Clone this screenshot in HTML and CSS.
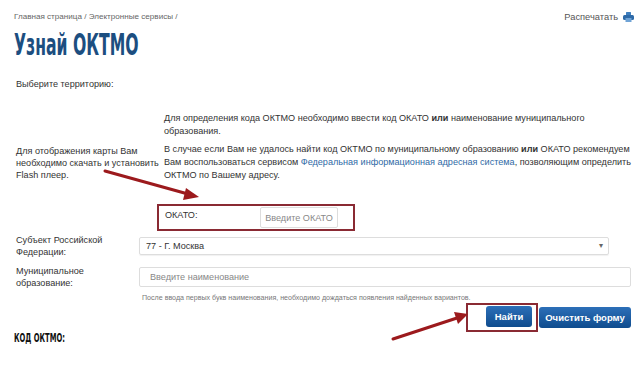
FILE: index.html
```html
<!DOCTYPE html>
<html lang="ru">
<head>
  <meta charset="UTF-8">
  <title>Узнай ОКТМО</title>
  <link rel="stylesheet" href="styles.css">
</head>
<body>
  <div class="page">

    <!-- шапка -->
    <div class="topbar">
      <div class="crumbs">Главная страница / Электронные сервисы /</div>
      <a class="print" href="#">Распечатать
        <svg class="print-ico" width="11" height="10" viewBox="0 0 11 10">
          <rect x="3" y="0" width="5" height="3" rx="0.5" fill="#3f7fbf"/>
          <rect x="0" y="3" width="11" height="5" rx="1.5" fill="#2e6aa8"/>
          <rect x="2.5" y="6" width="6" height="4" fill="#6fa3d6"/>
        </svg>
      </a>
    </div>

    <h1 class="title"><span>Узнай ОКТМО</span></h1>

    <p class="choose">Выберите территорию:</p>

    <!-- описание -->
    <div class="info">
      <div class="flash">Для отображения карты Вам<br>необходимо скачать и установить<br>Flash плеер.</div>
      <div class="notes">
        <p>Для определения кода ОКТМО необходимо ввести код ОКАТО <b>или</b> наименование муниципального<br>образования.</p>
        <p>В случае если Вам не удалось найти код ОКТМО по муниципальному образованию <b>или</b> ОКАТО рекомендуем<br>Вам воспользоваться сервисом <a href="#">Федеральная информационная адресная система</a>, позволяющим определить<br>ОКТМО по Вашему адресу.</p>
      </div>
    </div>

    <!-- форма -->
    <div class="okato">
      <span class="okato-label">ОКАТО:</span>
      <input type="text" class="okato-input" placeholder="Введите ОКАТО">
    </div>

    <div class="field">
      <label>Субъект Российской<br>Федерации:</label>
      <div class="select">77 - Г. Москва<span class="caret">▾</span></div>
    </div>

    <div class="field">
      <label>Муниципальное<br>образование:</label>
      <input type="text" class="text-input" placeholder="Введите наименование">
    </div>

    <p class="hint">После ввода первых букв наименования, необходимо дождаться появления найденных вариантов.</p>

    <div class="actions">
      <span class="mark"><button class="btn">Найти</button></span>
      <button class="btn">Очистить форму</button>
    </div>

    <h2 class="result"><span>КОД ОКТМО:</span></h2>

    <!-- стрелки поверх -->
    <svg class="arrows" width="640" height="366" viewBox="0 0 640 366">
      <line x1="105" y1="171" x2="188" y2="194" stroke="#9c1a1d" stroke-width="3" stroke-linecap="round"/>
      <polygon points="199,197 186,188 183,200" fill="#9c1a1d"/>
      <line x1="393" y1="339" x2="457" y2="318" stroke="#9c1a1d" stroke-width="3" stroke-linecap="round"/>
      <polygon points="468,314 454,312 458,324" fill="#9c1a1d"/>
    </svg>
  </div>
</body>
</html>
```

FILE: styles.css
```css
body {
  margin: 0;
  background: #fff;
  color: #333;
  font-family: 'Liberation Sans', Arial, sans-serif;
  font-size: 9.1px;
}
.page {
  position: relative;
  width: 640px;
  height: 366px;
  overflow: hidden;
  padding: 0 9px 0 14px;
  box-sizing: border-box;
}
p {
  margin: 0;
}
.topbar {
  display: flex;
  justify-content: space-between;
  align-items: center;
  padding-top: 11px;
  line-height: 12px;
}
.crumbs {
  color: #666;
  font-size: 8.1px;
}
.print {
  color: #555;
  font-size: 9.3px;
  text-decoration: none;
  display: flex;
  align-items: center;
  gap: 5px;
  margin-right: -3px;
}
.title {
  margin: 7px 0 0;
  height: 30px;
  line-height: 30px;
  font-family: 'DejaVu Sans Condensed', 'DejaVu Sans', sans-serif;
  font-size: 30px;
  font-weight: bold;
  color: #1c4e80;
}
.title span,
.result span {
  display: inline-block;
  transform: scaleX(0.58);
  transform-origin: left center;
  white-space: nowrap;
}
.result span {
  transform: scaleX(0.63);
}
.choose {
  margin: 18px 0 0 2px;
  line-height: 13px;
}
.info {
  display: grid;
  grid-template-columns: 148px 1fr;
  margin: 21px 0 0 2px;
}
.flash {
  align-self: end;
  line-height: 12px;
  padding-bottom: 1px;
  white-space: nowrap;
}
.notes p {
  line-height: 13px;
  white-space: nowrap;
}
.notes p + p {
  margin-top: 5px;
}
.notes a {
  color: #2f6aa6;
  text-decoration: none;
}
.okato {
  display: flex;
  align-items: flex-start;
  justify-content: space-between;
  width: 198px;
  height: 27px;
  box-sizing: border-box;
  margin: 22px 0 0 143px;
  padding: 1px 15px 0 6px;
  border: 2px solid #8a2a33;
}
.okato-label {
  line-height: 12px;
  margin-top: 2px;
}
.okato-input {
  width: 78px;
  height: 21px;
  box-sizing: border-box;
  border: 1px solid #ddd;
  border-radius: 2px;
  padding: 0;
  text-align: center;
  font-family: inherit;
  font-size: 9.1px;
}
.okato-input::placeholder,
.text-input::placeholder {
  color: #888;
}
.field {
  display: grid;
  grid-template-columns: 123px 1fr;
  align-items: center;
  margin-top: 3px;
  margin-left: 2px;
}
.field + .field {
  margin-top: 7px;
}
.field label {
  line-height: 12px;
}
.select {
  position: relative;
  height: 18px;
  line-height: 16px;
  box-sizing: border-box;
  margin-right: 22px;
  padding-left: 6px;
  border: 1px solid #ddd;
  border-radius: 2px;
  box-shadow: 0 1px 1px rgba(0,0,0,0.06);
}
.caret {
  position: absolute;
  right: 5px;
  top: 0;
  color: #666;
  font-size: 8px;
}
.text-input {
  height: 20px;
  box-sizing: border-box;
  border: 1px solid #ddd;
  border-radius: 2px;
  padding: 0 0 0 10px;
  font-family: inherit;
  font-size: 9.1px;
}
.hint {
  margin: 4px 0 0 128px;
  line-height: 10px;
  font-size: 7.1px;
  color: #777;
}
.actions {
  display: flex;
  justify-content: flex-end;
  align-items: center;
  gap: 1px;
}
.mark {
  display: inline-block;
  border: 2px solid #8a2a33;
  padding: 1px 4px 3px 18px;
}
.btn {
  height: 21px;
  border: none;
  border-radius: 3px;
  background: linear-gradient(#2c6fb8, #0f4c8e);
  color: #fff;
  font-family: 'Liberation Sans', Arial, sans-serif;
  font-size: 9.5px;
  font-weight: bold;
  padding: 0 4px;
  white-space: nowrap;
  cursor: pointer;
}
.mark .btn {
  width: 46px;
  display: block;
}
.actions > .btn {
  width: 92px;
}
.result {
  margin: 0;
  line-height: 12px;
  height: 12px;
  font-family: 'DejaVu Sans Condensed', 'DejaVu Sans', sans-serif;
  font-size: 12px;
  font-weight: bold;
  color: #111;
}
.arrows {
  position: absolute;
  left: 0;
  top: 0;
  pointer-events: none;
}
```
